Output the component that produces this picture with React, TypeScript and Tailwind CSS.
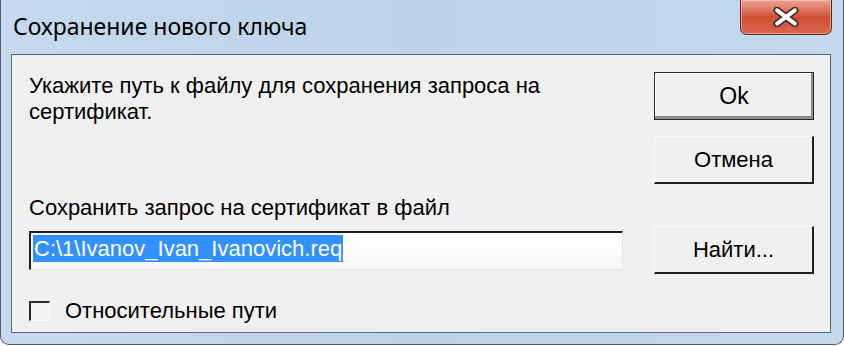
import React from "react";

const ui = { fontFamily: '"Liberation Sans", Arial, sans-serif' };
const title = { fontFamily: '"Noto Sans", "Open Sans", sans-serif' };

function CloseGlyph() {
  return (
    <svg viewBox="0 0 24 18" className="w-[28px] h-[20px]">
      <path d="M4 3 L20 15 M20 3 L4 15" stroke="#3a2a28" strokeWidth="6.5" strokeLinecap="round" fill="none" />
      <path d="M4 3 L20 15 M20 3 L4 15" stroke="#ffffff" strokeWidth="3.6" strokeLinecap="round" fill="none" />
    </svg>
  );
}

function ClassicButton({ label, primary }: { label: string; primary?: boolean }) {
  return (
    <button
      className={
        primary
          ? "w-[160px] h-[48px] bg-[#f0f0f0] border border-[#2b2b2b] shadow-[inset_-2px_-3px_0_#8a8a8a,inset_1px_1px_0_#ffffff] text-[23px] text-black flex items-center justify-center"
          : "w-[160px] h-[48px] bg-[#f0f0f0] border-t border-l border-t-[#fafafa] border-l-[#fafafa] border-r-2 border-b-2 border-r-[#1f1f1f] border-b-[#1f1f1f] text-[22px] text-black flex items-center justify-center"
      }
      style={ui}
    >
      {label}
    </button>
  );
}

export default function App() {
  return (
    <div className="w-[844px] h-[346px] bg-white">
      <div className="w-[844px] h-[345px] flex flex-col bg-gradient-to-r from-[#c6d9ee] via-[#bcd3ea] to-[#c3d8ed] border-x border-b border-[#4d5b6b] rounded-b-[9px] overflow-hidden">
        {/* Title bar */}
        <div className="h-[54px] flex items-start justify-between shrink-0">
          <div className="pl-[12px] pt-[12px] text-[23px] text-black leading-[28px]" style={title}>
            Сохранение нового ключа
          </div>
          <div className="mr-[11px] w-[92px] h-[35px] rounded-b-[7px] border border-t-0 border-[#5a2b20] bg-gradient-to-b from-[#e9a594] via-[#cf4f36] to-[#d9664b] shadow-[inset_0_0_0_1px_rgba(255,210,200,0.5)] flex items-center justify-center">
            <CloseGlyph />
          </div>
        </div>

        {/* Client area */}
        <div className="ml-[10px] mr-[12px] h-[279px] border border-[#55677a] bg-[#f0f0f0] flex" style={ui}>
          <div className="flex-1 pl-[17px] pt-[18px] flex flex-col">
            <div className="text-[22px] leading-[26px] text-black w-[580px]">
              Укажите путь к файлу для сохранения запроса на сертификат.
            </div>
            <div className="mt-[70px] text-[22px] leading-[26px] text-black">
              Сохранить запрос на сертификат в файл
            </div>
            <div className="mt-[10px] w-[594px] h-[39px] border-t-2 border-l-2 border-t-[#202020] border-l-[#202020] border-r border-b border-r-[#e4e4e4] border-b-[#e4e4e4] bg-gradient-to-b from-white to-[#f7f7f7] pl-[2px] pt-[2px]">
              <span className="inline-block h-[27px] bg-[#3390ff] text-white text-[22px] leading-[27px] px-[1px]">
                C:\1\Ivanov_Ivan_Ivanovich.req
              </span>
            </div>
            <div className="mt-[28px] flex items-center gap-[15px]">
              <div className="w-[21px] h-[20px] border-t-2 border-l-2 border-t-[#2a2a2a] border-l-[#2a2a2a] border-r border-b border-r-white border-b-white bg-[#f3f3f3]" />
              <span className="text-[22px] leading-[26px] text-black">Относительные пути</span>
            </div>
          </div>
          <div className="w-[176px] pt-[17px] flex flex-col shrink-0">
            <ClassicButton label="Ok" primary />
            <div className="h-[16px]" />
            <ClassicButton label="Отмена" />
            <div className="h-[42px]" />
            <ClassicButton label="Найти..." />
          </div>
        </div>
      </div>
    </div>
  );
}
